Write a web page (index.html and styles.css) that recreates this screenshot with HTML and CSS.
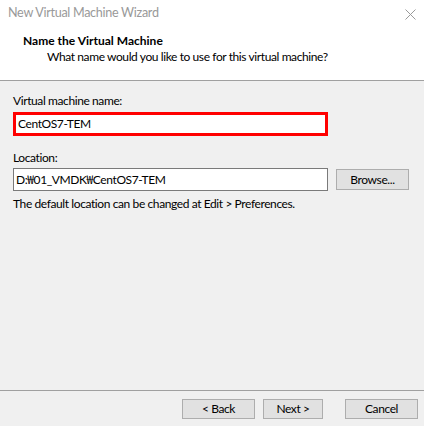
FILE: index.html
```html
<!DOCTYPE html>
<html>
<head>
<meta charset="utf-8">
<link rel="stylesheet" href="styles.css">
</head>
<body>
<div class="window">
  <div class="header">
    <div class="titlebar">
      <span class="title">New Virtual Machine Wizard</span>
      <svg class="close" width="11" height="11" viewBox="0 0 11 11"><path d="M0.5 0.5 L10.5 10.5 M10.5 0.5 L0.5 10.5" stroke="#9a9a9a" stroke-width="1" fill="none"/></svg>
    </div>
    <div class="heading">Name the Virtual Machine</div>
    <div class="sub">What name would you like to use for this virtual machine?</div>
  </div>
  <div class="content">
    <div class="label">Virtual machine name:</div>
    <div class="field field-red">CentOS7-TEM</div>
    <div class="label label-loc">Location:</div>
    <div class="row">
      <div class="field field-loc">D:<span class="won">₩</span>01_VMDK<span class="won">₩</span>CentOS7-TEM</div>
      <div class="btn btn-browse">Browse...</div>
    </div>
    <div class="help">The default location can be changed at Edit &gt; Preferences.</div>
  </div>
  <div class="footer">
    <div class="btn btn-back">&lt; Back</div>
    <div class="btn btn-next">Next &gt;</div>
    <div class="btn btn-cancel">Cancel</div>
  </div>
</div>
</body>
</html>
```
FILE: styles.css
```css
* { box-sizing: border-box; }
html, body { margin: 0; padding: 0; }
body {
  font-family: "Lato", "Noto Sans CJK KR", sans-serif;
  font-size: 12px;
  letter-spacing: -0.4px;
  color: #000;
  background: #f0f0f0;
}
.window {
  width: 424px;
  height: 426px;
  display: flex;
  flex-direction: column;
  background: #f0f0f0;
}
.header {
  height: 81px;
  background: #fff;
  border-bottom: 1px solid #a0a0a0;
}
.titlebar {
  height: 29px;
  display: flex;
  justify-content: space-between;
  align-items: flex-start;
  padding: 3px 8px 0 8px;
}
.title {
  color: #999;
  font-size: 12.6px;
  line-height: 20px;
  letter-spacing: -0.3px;
}
.close { margin-top: 6px; }
.heading {
  font-weight: bold;
  padding-left: 23px;
  line-height: 17px;
  margin-top: 3px;
  letter-spacing: 0;
}
.sub {
  padding-left: 47px;
  line-height: 16px;
}
.content {
  flex: 1;
  padding: 12px 15px 0 13px;
}
.label { line-height: 16px; }
.field {
  background: #fff;
  line-height: 16px;
  white-space: nowrap;
}
.won { font-family: "Noto Sans CJK KR", sans-serif; }
.field-red {
  margin-top: 3px;
  width: 315px;
  height: 24px;
  border: 3px solid #ff0000;
  padding: 1px 0 0 2px;
}
.label-loc { margin-top: 14px; }
.row {
  display: flex;
  align-items: center;
  margin-top: 2px;
}
.field-loc {
  width: 315px;
  height: 23px;
  border: 1px solid #7a7a7a;
  padding: 2px 0 0 2px;
}
.btn {
  background: #e1e1e1;
  border: 1px solid #adadad;
  display: flex;
  align-items: center;
  justify-content: center;
  line-height: 16px;
}
.btn-browse {
  margin-left: 8px;
  width: 73px;
  height: 21px;
}
.help {
  margin-top: 5px;
  line-height: 16px;
}
.footer {
  height: 36px;
  border-top: 1px solid #a0a0a0;
  display: flex;
  justify-content: flex-end;
  align-items: flex-start;
  padding: 8px 6px 0 0;
}
.btn-back { width: 73px; height: 20px; }
.btn-next { width: 60px; height: 20px; margin-left: 8px; }
.btn-cancel { width: 73px; height: 20px; margin-left: 22px; }
```
